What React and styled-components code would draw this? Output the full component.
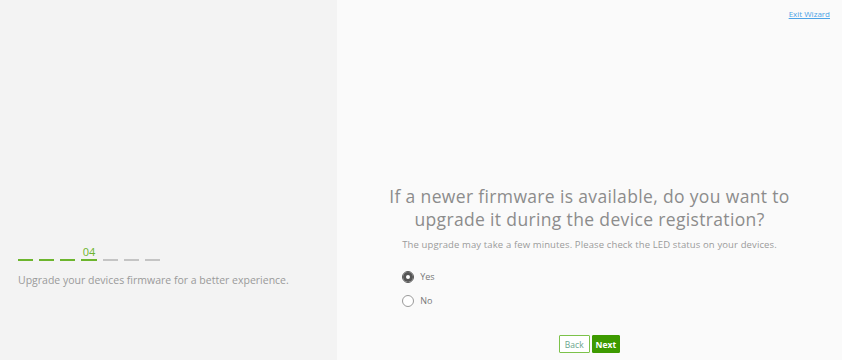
import React, { useState } from "react";
import styled, { createGlobalStyle } from "styled-components";

const Global = createGlobalStyle`
  html, body { margin: 0; padding: 0; }
  body { font-family: "Open Sans", "Noto Sans", sans-serif; }
  #root { width: 842px; height: 360px; }
`;

const Page = styled.div`
  display: flex;
  width: 842px;
  height: 360px;
  overflow: hidden;
`;

const Side = styled.aside`
  width: 337px;
  flex: none;
  background: #f3f3f3;
  display: flex;
  flex-direction: column;
  padding: 247px 0 0 18px;
  box-sizing: border-box;
`;

const Steps = styled.div`
  display: flex;
  gap: 6px;
  align-items: flex-end;
  height: 14px;
`;

const Step = styled.div`
  width: ${p => (p.$current ? 16 : 15)}px;
  border-bottom: 2px solid ${p => (p.$done ? "#6cb52d" : "#c4c4c4")};
  color: #6cb52d;
  font-size: 11px;
  line-height: 11px;
  text-align: center;
  padding-bottom: 2px;
  height: 11px;
`;

const SideText = styled.p`
  margin: 12px 0 0;
  font-size: 10.5px;
  color: #9a9a9a;
  letter-spacing: 0;
`;

const Main = styled.main`
  flex: 1;
  background: #fafafa;
  display: flex;
  flex-direction: column;
  align-items: center;
`;

const TopBar = styled.div`
  align-self: stretch;
  display: flex;
  justify-content: flex-end;
  padding: 8px 12px 0 0;
  height: 12px;
`;

const ExitLink = styled.a`
  color: #4da3e6;
  font-size: 8px;
  text-decoration: underline;
  cursor: pointer;
`;

const Content = styled.section`
  margin-top: 165px;
  display: flex;
  flex-direction: column;
  align-items: center;
`;

const Title = styled.h1`
  margin: 0;
  font-weight: 400;
  font-size: 17.5px;
  line-height: 23px;
  color: #8c8c8c;
  text-align: center;
  letter-spacing: 0.35px;
`;

const Sub = styled.p`
  margin: 7px 0 0;
  font-size: 9.5px;
  color: #9a9a9a;
  letter-spacing: 0.12px;
`;

const Options = styled.div`
  align-self: stretch;
  display: flex;
  flex-direction: column;
  gap: 11px;
  margin-top: 19px;
  padding-left: 13px;
`;

const Option = styled.label`
  display: flex;
  align-items: center;
  gap: 6px;
  font-size: 9px;
  color: #777;
  cursor: pointer;
`;

const Radio = styled.span`
  width: 10px;
  height: 10px;
  border-radius: 50%;
  border: 1px solid ${p => (p.$on ? "#555" : "#9a9a9a")};
  background: #fff;
  box-shadow: ${p => (p.$on ? "inset 0 0 0 3px #555" : "none")};
  flex: none;
`;

const Footer = styled.div`
  margin-top: auto;
  margin-bottom: 7px;
  display: flex;
  gap: 2px;
`;

const Btn = styled.button`
  height: 18px;
  padding: 0 ${p => (p.$primary ? 3 : 5)}px;
  font-family: inherit;
  font-size: 8.5px;
  font-weight: ${p => (p.$primary ? 700 : 400)};
  border: 1px solid ${p => (p.$primary ? "#3d9a00" : "#7cc24a")};
  background: ${p => (p.$primary ? "#3d9a00" : "#fff")};
  color: ${p => (p.$primary ? "#fff" : "#6aa58c")};
  border-radius: 1px;
  cursor: pointer;
`;

export default function App() {
  const [val, setVal] = useState("yes");
  const steps = [1, 2, 3, 4, 5, 6, 7];
  return (
    <>
      <Global />
      <Page>
        <Side>
          <Steps>
            {steps.map(s => (
              <Step key={s} $done={s <= 4} $current={s === 4}>
                {s === 4 ? "04" : ""}
              </Step>
            ))}
          </Steps>
          <SideText>Upgrade your devices firmware for a better experience.</SideText>
        </Side>
        <Main>
          <TopBar>
            <ExitLink>Exit Wizard</ExitLink>
          </TopBar>
          <Content>
            <Title>
              If a newer firmware is available, do you want to
              <br />
              upgrade it during the device registration?
            </Title>
            <Sub>The upgrade may take a few minutes. Please check the LED status on your devices.</Sub>
            <Options>
              <Option onClick={() => setVal("yes")}>
                <Radio $on={val === "yes"} />
                Yes
              </Option>
              <Option onClick={() => setVal("no")}>
                <Radio $on={val === "no"} />
                No
              </Option>
            </Options>
          </Content>
          <Footer>
            <Btn>Back</Btn>
            <Btn $primary>Next</Btn>
          </Footer>
        </Main>
      </Page>
    </>
  );
}
